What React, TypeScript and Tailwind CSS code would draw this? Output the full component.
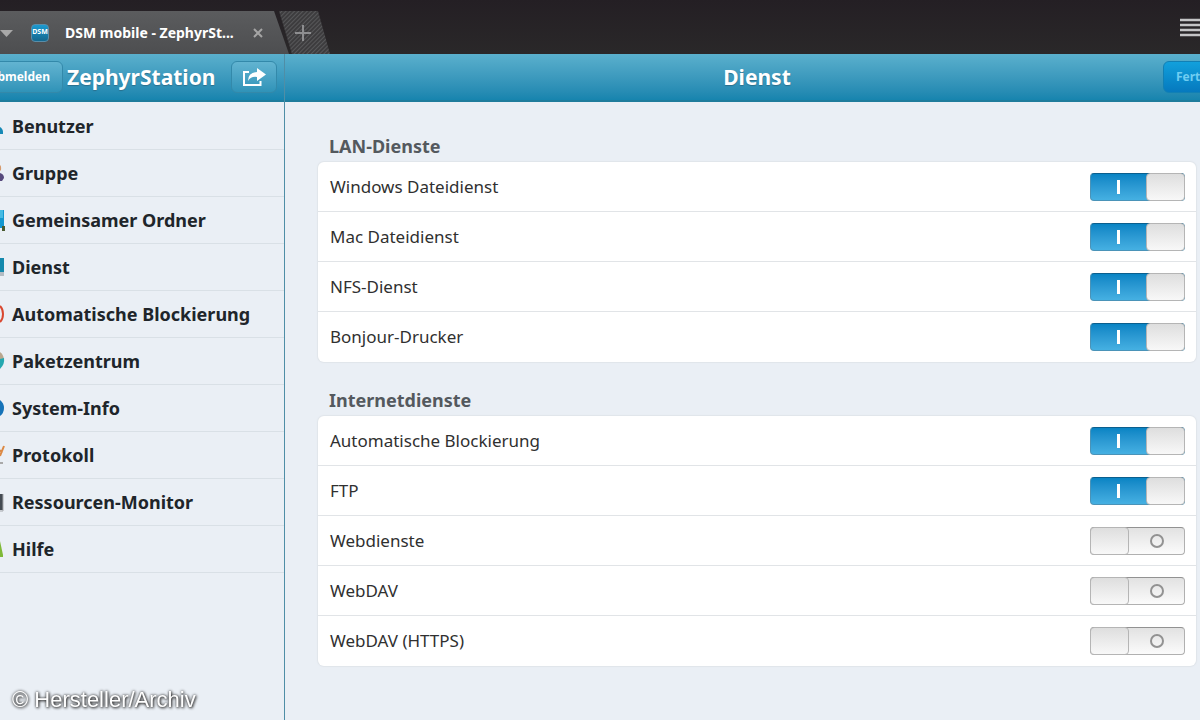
import { useState } from 'react'
import type { ReactNode } from 'react'

interface NavItem {
    label: string
    icon: ReactNode
}

interface Service {
    name: string
    enabled: boolean
}

const navItems: NavItem[] = [
    { label: 'Benutzer', icon: <path d="M0 17C1.500 18 3 19.500 3 22V24H0Z" fill="#1689b5" /> },
    {
        label: 'Gruppe',
        icon: (
            <>
                <path d="M0 8Q1.500 9 1 13L0 14Z" fill="#d69a6d" />
                <path d="M0 16Q4 17 4 21L2 24H0Z" fill="#574a7d" />
            </>
        )
    },
    {
        label: 'Gemeinsamer Ordner',
        icon: (
            <>
                <path d="M0 6H4V24H0Z" fill="#1598cf" />
                <path d="M0 6H3V14H0Z" fill="#46bbe3" />
                <path d="M2 22H5V27H2Z" fill="#4a5a30" />
            </>
        )
    },
    {
        label: 'Dienst',
        icon: (
            <>
                <path d="M0 7H4V21H0Z" fill="#1489ad" />
                <path d="M0 21H4V25H0Z" fill="#b4bcc3" />
            </>
        )
    },
    { label: 'Automatische Blockierung', icon: <path d="M0 8Q3 11 3 16T0 24" fill="none" stroke="#d9472f" strokeWidth="2" /> },
    {
        label: 'Paketzentrum',
        icon: (
            <>
                <path d="M0 7Q3 9 4 14L0 16Z" fill="#b9a78f" />
                <path d="M0 14L4 13Q5 19 0 24Z" fill="#24a8b0" />
            </>
        )
    },
    { label: 'System-Info', icon: <path d="M0 8Q4 11 4 16T0 24Z" fill="#1673b8" /> },
    {
        label: 'Protokoll',
        icon: (
            <>
                <path d="M4 7L0 17M0 11L2 14" fill="none" stroke="#dc8a45" strokeWidth="2" />
                <path d="M0 24H3" stroke="#a9a9a9" strokeWidth="2" />
            </>
        )
    },
    {
        label: 'Ressourcen-Monitor',
        icon: (
            <>
                <path d="M0 8H3V24H0Z" fill="#444b52" />
                <path d="M3 8V25H0" fill="none" stroke="#a6a9ad" />
            </>
        )
    },
    { label: 'Hilfe', icon: <path d="M0 8L3 22V24H0Z" fill="#7fb938" /> }
]

const lanServices: Service[] = [
    { name: 'Windows Dateidienst', enabled: true },
    { name: 'Mac Dateidienst', enabled: true },
    { name: 'NFS-Dienst', enabled: true },
    { name: 'Bonjour-Drucker', enabled: true }
]

const internetServices: Service[] = [
    { name: 'Automatische Blockierung', enabled: true },
    { name: 'FTP', enabled: true },
    { name: 'Webdienste', enabled: false },
    { name: 'WebDAV', enabled: false },
    { name: 'WebDAV (HTTPS)', enabled: false }
]

function BrowserBar() {
    return (
        <div className="flex h-[54px] shrink-0 items-end overflow-hidden bg-gradient-to-b from-[#241f24] to-[#2a2829]">
            <div className="flex h-[43px] w-[289px] shrink-0 items-center bg-gradient-to-b from-[#5b5c5e] to-[#4d4e50] [clip-path:polygon(0_0,274px_0,100%_100%,0_100%)]">
                <svg className="h-2 w-[13px] shrink-0" viewBox="0 0 13 8" aria-hidden="true">
                    <path d="M0 1H13L6.500 8Z" fill="#a8a8a8" />
                </svg>
                <span className="ml-[18px] flex h-[18px] w-[18px] shrink-0 items-center justify-center rounded-sm border border-[#5a8da8] bg-gradient-to-b from-[#1b9ad1] to-[#14688f] text-[7px] font-bold text-white">
                    DSM
                </span>
                <span className="ml-4 w-[172px] truncate text-sm font-bold text-white">DSM mobile - ZephyrSt...</span>
                <button type="button" aria-label="Tab schließen" className="ml-4">
                    <svg className="h-[10px] w-[10px]" viewBox="0 0 10 10" aria-hidden="true">
                        <path d="M1 1L9 9M9 1L1 9" stroke="#a5a5a5" strokeWidth="2" />
                    </svg>
                </button>
            </div>
            <button type="button" aria-label="Neuer Tab" className="-ml-3 shrink-0">
                <svg className="h-[43px] w-[53px]" viewBox="0 0 53 43" aria-hidden="true">
                    <defs>
                        <pattern id="hatch" width="3" height="3" patternUnits="userSpaceOnUse" patternTransform="rotate(45)">
                            <rect width="3" height="3" fill="#3d3c3e" />
                            <rect width="1" height="3" fill="#58585a" />
                        </pattern>
                    </defs>
                    <path d="M2 0H41L53 43H15Z" fill="url(#hatch)" />
                    <path d="M18 22H34M26 14V30" stroke="#8e8e90" strokeWidth="2" />
                </svg>
            </button>
            <button type="button" aria-label="Menü" className="-mr-1 mb-[14px] ml-auto">
                <svg className="h-[22px] w-6" viewBox="0 0 24 22" aria-hidden="true">
                    <path d="M0 2H24M0 7H24M0 12H24M0 17H24" stroke="#c4c4c6" strokeWidth="2.500" />
                </svg>
            </button>
        </div>
    )
}

function Sidebar() {
    return (
        <aside className="flex w-[285px] shrink-0 flex-col overflow-hidden border-r border-[#4f8ea6]">
            <header className="flex h-12 shrink-0 items-center border-b-2 border-[#1f7c9c] bg-gradient-to-b from-[#5ab0cd] to-[#1684ae]">
                <button
                    type="button"
                    className="-ml-6 flex h-8 w-[87px] shrink-0 items-center justify-end rounded-md border border-[#3389aa] bg-gradient-to-b from-[#62b4d1] to-[#2f93b8] pr-3 text-xs font-bold text-white"
                >
                    Abmelden
                </button>
                <h2 className="flex-1 whitespace-nowrap pl-1 text-[21px] font-bold leading-8 text-white [text-shadow:0_1px_1px_#2a6f8c]">
                    ZephyrStation
                </h2>
                <button
                    type="button"
                    aria-label="Teilen"
                    className="mr-[7px] flex h-8 w-[46px] shrink-0 items-center justify-center rounded-md border border-[#3389aa] bg-gradient-to-b from-[#62b4d1] to-[#2f93b8]"
                >
                    <svg className="h-5 w-6" viewBox="0 0 24 20" aria-hidden="true">
                        <path d="M7 5H2V18H18.500V14" fill="none" stroke="#fff" strokeWidth="2" />
                        <path d="M15 1L24 7.500L15 14V10Q9 9 6 14Q6 5.500 15 5Z" fill="#fff" />
                    </svg>
                </button>
            </header>
            <nav className="pt-px">
                <ul>
                    {navItems.map((item) => (
                        <li key={item.label} className="border-b border-[#d9e0e6]">
                            <a href="#" className="flex h-[46px] items-center gap-[6px] whitespace-nowrap text-lg font-bold text-[#20252a]">
                                <svg className="h-8 w-[6px] shrink-0" viewBox="0 0 6 32" aria-hidden="true">
                                    {item.icon}
                                </svg>
                                {item.label}
                            </a>
                        </li>
                    ))}
                </ul>
            </nav>
        </aside>
    )
}

function Toggle({ id, defaultOn }: { id: string; defaultOn: boolean }) {
    const [on, setOn] = useState(defaultOn)

    return (
        <span className="grid h-7 w-[95px] shrink-0">
            <input
                id={id}
                type="checkbox"
                checked={on}
                onChange={(e) => setOn(e.target.checked)}
                className="col-start-1 row-start-1 h-7 w-[95px] cursor-pointer appearance-none rounded-[4px] border border-[#b0b0b0] border-t-[#929292] bg-gradient-to-b from-[#e2e2e2] to-[#fbfbfb] checked:border-[#4a93b8] checked:border-t-[#0b5f8e] checked:from-[#0784c4] checked:to-[#45b0e2]"
            />
            <span className={`pointer-events-none col-start-1 row-start-1 flex items-center ${on ? '' : 'flex-row-reverse'}`} aria-hidden="true">
                <span className="flex flex-1 items-center justify-center">
                    {on ? (
                        <span className="h-[14px] w-[3px] bg-white"></span>
                    ) : (
                        <span className="h-[14px] w-[14px] rounded-full border-2 border-[#929292]"></span>
                    )}
                </span>
                <span className="h-7 w-[39px] rounded-[4px] border border-[#b5b5b5] bg-gradient-to-b from-[#dedede] to-[#f8f8f8]"></span>
            </span>
        </span>
    )
}

function ServiceGroup({ title, services }: { title: string; services: Service[] }) {
    return (
        <section>
            <h3 className="px-[11px] pb-1 text-lg font-bold leading-6 text-[#54595e]">{title}</h3>
            <ul className="divide-y divide-[#e1e4e7] rounded-md bg-white shadow-[0_0_1px_1px_#e0e5ea]">
                {services.map((service) => {
                    const id = `${title}-${service.name}`
                    return (
                        <li key={id} className="flex h-[50px] items-center justify-between pl-3 pr-[11px]">
                            <label htmlFor={id} className="text-[17px] text-[#303030]">{service.name}</label>
                            <Toggle id={id} defaultOn={service.enabled} />
                        </li>
                    )
                })}
            </ul>
        </section>
    )
}

export default function App() {
    return (
        <div className="flex min-h-screen flex-col overflow-hidden bg-[#eaeff5] font-['Noto_Sans',sans-serif]">
            <BrowserBar />
            <div className="flex flex-1">
                <Sidebar />
                <main className="min-w-0 flex-1 overflow-hidden">
                    <header className="flex h-12 items-center border-b-2 border-[#1f7c9c] bg-gradient-to-b from-[#5ab0cd] to-[#1684ae]">
                        <h1 className="flex-1 pl-[66px] text-center text-[21px] font-bold leading-8 text-white [text-shadow:0_1px_1px_#2a6f8c]">
                            Dienst
                        </h1>
                        <button
                            type="button"
                            className="-mr-7 h-8 w-[65px] shrink-0 rounded-md border border-[#1180b5] bg-gradient-to-b from-[#12a0dc] to-[#0679be] pl-3 text-left text-xs font-bold text-[#6fcdf2]"
                        >
                            Fertig
                        </button>
                    </header>
                    <div className="flex flex-col gap-[26px] pb-12 pl-[33px] pr-1 pt-8">
                        <ServiceGroup title="LAN-Dienste" services={lanServices} />
                        <ServiceGroup title="Internetdienste" services={internetServices} />
                    </div>
                </main>
            </div>
            <p className="fixed bottom-2 left-3 font-['Liberation_Sans',sans-serif] text-[22px] leading-6 text-white [text-shadow:0_0_3px_#222,1px_1px_3px_#333]">
                © Hersteller/Archiv
            </p>
        </div>
    )
}
